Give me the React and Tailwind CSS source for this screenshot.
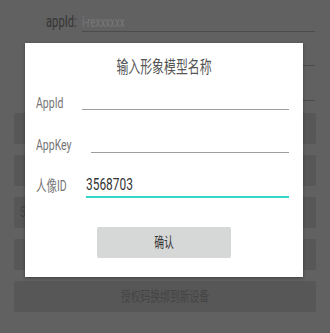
import React from "react";

const squish = "inline-block whitespace-nowrap scale-x-[0.7]";

function Field({ label, labelW, rowH, mt, labelMb, children, line }) {
  return (
    <div className={`flex items-end ml-[11px] mr-[14px] ${rowH} ${mt}`}>
      <div className={`${labelW} shrink-0 ${labelMb} text-[15px] leading-[18px] text-[#757575]`}>
        <span className={`${squish} origin-left`}>{label}</span>
      </div>
      <div className={`flex-1 h-full flex items-end ${line}`}>{children}</div>
    </div>
  );
}

export default function App() {
  const bgButtons = [
    { text: "" },
    { text: "" },
    { text: "SDK激活", left: true },
    { text: "" },
    { text: "授权码换绑到新设备" },
  ];

  return (
    <div className="relative w-[330px] h-[333px] overflow-hidden bg-[#616161] font-['Roboto','Noto_Sans_CJK_SC',sans-serif]">
      {/* dimmed page behind the dialog */}
      <div className="flex h-[20px] mt-[12px]">
        <div className="w-[36px] ml-[46px] flex items-center text-[16px] leading-[18px] text-[#363636]">
          <span className={`${squish} origin-left`}>appId:</span>
        </div>
        <div className="flex-1 mr-[15px] border-b border-[#4c4c4c] flex items-center text-[14px] leading-[18px] text-[#787878]">
          <span className={`${squish} origin-left`}>i-rexxxxxx</span>
        </div>
      </div>
      <div className="h-[34px] ml-[83px] mr-[15px] border-b border-[#4c4c4c]" />
      <div className="h-[35px] ml-[83px] mr-[15px] border-b border-[#4c4c4c]" />
      <div className="mt-[12px] mx-[14px] flex flex-col gap-[11px]">
        {bgButtons.map((b, i) => (
          <div
            key={i}
            className={`h-[31px] rounded-[2px] bg-[#575757] flex items-center text-[14px] text-[#454545] ${
              b.left ? "pl-[6px]" : "justify-center"
            }`}
          >
            <span className={`${squish} ${b.left ? "origin-left" : "origin-center"}`}>{b.text}</span>
          </div>
        ))}
      </div>

      {/* dialog */}
      <div className="absolute left-[25px] top-[43px] w-[278px] h-[234px] bg-white shadow-[0_1px_3px_rgba(0,0,0,0.35)] flex flex-col">
        <div className="mt-[13px] h-[24px] flex items-center justify-center text-[17px] text-[#555]">
          <span className={`${squish} origin-center`}>输入形象模型名称</span>
        </div>

        <Field
          label="AppId"
          labelW="w-[46px]"
          rowH="h-[22px]"
          mt="mt-[8px]"
          labelMb="mb-[-2px]"
          line="border-b border-[#9e9e9e]"
        />
        <Field
          label="AppKey"
          labelW="w-[55px]"
          rowH="h-[22px]"
          mt="mt-[21px]"
          labelMb="mb-[-1px]"
          line="border-b border-[#9e9e9e]"
        />
        <Field
          label="人像ID"
          labelW="w-[50px]"
          rowH="h-[25px]"
          mt="mt-[20px]"
          labelMb="mb-[3px]"
          line="border-b-2 border-[#35d6c6]"
        >
          <div className="pb-[2px] text-[17px] leading-[20px] text-[#333]">
            <span className={`${squish} origin-left`}>3568703</span>
          </div>
        </Field>

        <div className="mt-[29px] mx-auto w-[134px] h-[31px] rounded-[2px] bg-[#d6d7d7] flex items-center justify-center text-[14px] text-[#333]">
          <span className={`${squish} origin-center`}>确认</span>
        </div>
      </div>
    </div>
  );
}
